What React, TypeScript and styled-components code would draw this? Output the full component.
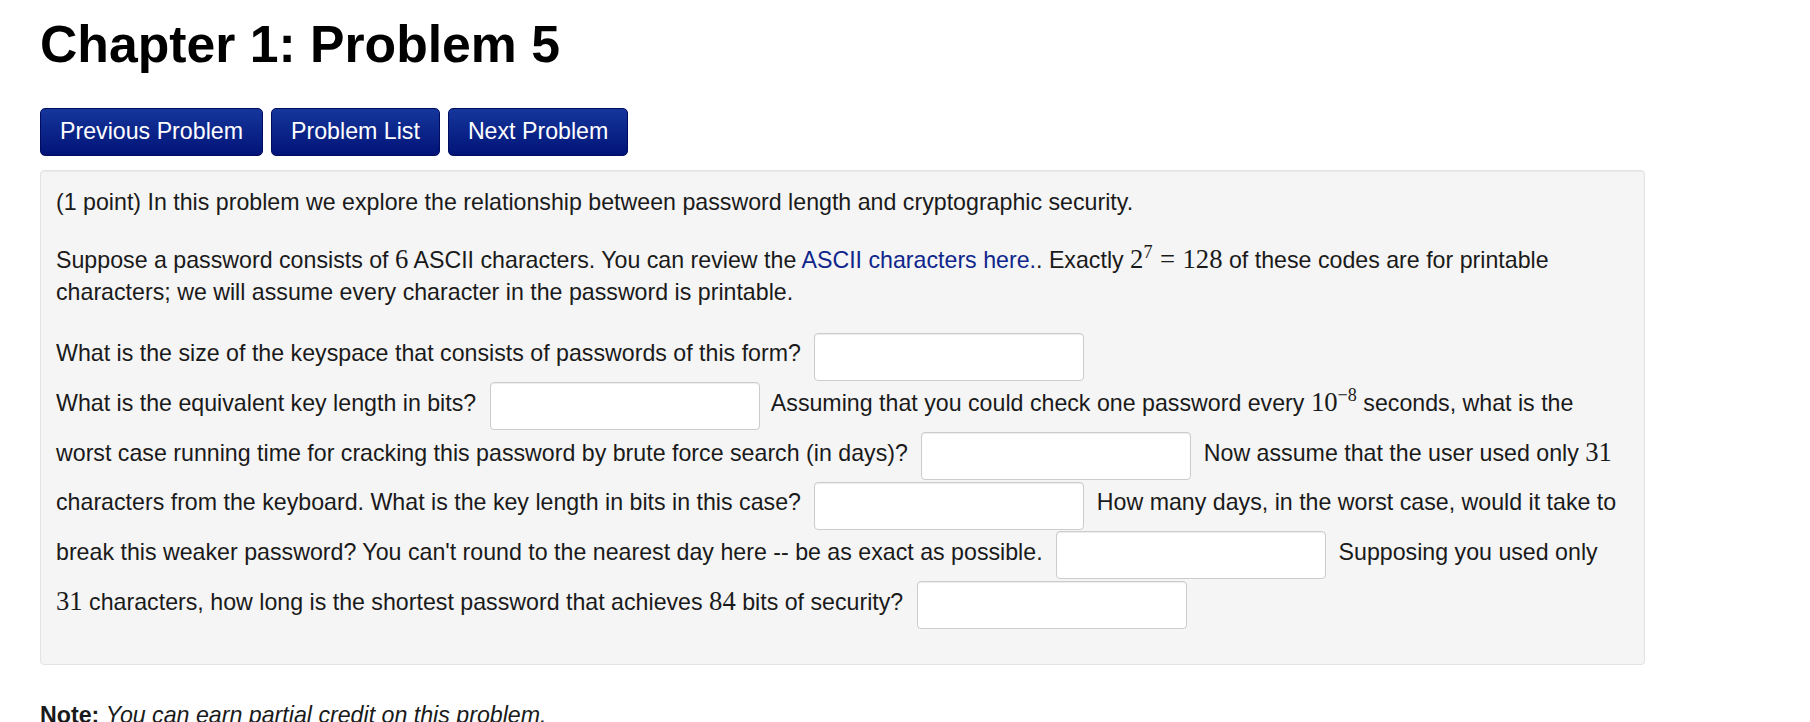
import React from "react";

import styled, { createGlobalStyle } from "styled-components";

const GlobalStyle = createGlobalStyle`
  html, body {
    margin: 0;
    padding: 0;
    background: #fff;
  }
  body {
    font-family: "Liberation Sans", Arial, Helvetica, sans-serif;
    font-size: 23.2px;
    line-height: 32px;
    color: #1a1a1a;
  }
`;

const Page = styled.div`
  padding-left: 40px;
  width: 1605px;
`;

const Title = styled.h1`
  margin: 16.4px 0 0 0;
  font-size: 51.7px;
  line-height: 1.1;
  font-weight: 700;
  color: #000;
`;

const NavRow = styled.div`
  display: flex;
  gap: 8px;
  margin-top: 34.6px;
`;

const NavButton = styled.button`
  height: 48px;
  padding: 0 19px;
  font-family: inherit;
  font-size: 23.2px;
  color: #fff;
  background: linear-gradient(#15369b, #011378);
  border: 1px solid #000d5e;
  border-radius: 5px;
  cursor: pointer;
`;

const Well = styled.div`
  margin-top: 14px;
  padding: 14.7px 15px 35.5px 15px;
  background: #f5f5f5;
  border: 1px solid #e3e3e3;
  border-radius: 4px;
  box-shadow: inset 0 1px 1px rgba(0, 0, 0, 0.05);
`;

const Paragraph = styled.p<{ $gap: number }>`
  margin: 0 0 ${(p) => p.$gap}px;
`;

const Link = styled.a`
  color: #10268c;
  text-decoration: none;
`;

const M = styled.span`
  font-family: "Liberation Serif", "DejaVu Serif", serif;
  font-size: 1.15em;
  line-height: 0;
`;

const Sup = styled.sup`
  font-size: 0.68em;
  line-height: 0;
  vertical-align: 0.55em;
`;

const Eq = styled.span`
  margin: 0 0.28em;
`;

const Answer = styled.input`
  box-sizing: border-box;
  width: 270px;
  height: 48px;
  margin: 2.33px 6px -0.67px 7px;
  padding: 4px 8px;
  vertical-align: middle;
  font-family: inherit;
  font-size: 20px;
  background: #fff;
  border: 1px solid #cccccc;
  border-radius: 4px;
  box-shadow: inset 0 1px 1px rgba(0, 0, 0, 0.075);
`;

const Note = styled.p`
  margin: 34.6px 0 0;
`;

const App: React.FC = () => {
  return (
    <Page>
      <GlobalStyle />
      <Title>Chapter 1: Problem 5</Title>
      <NavRow>
        <NavButton>Previous Problem</NavButton>
        <NavButton>Problem List</NavButton>
        <NavButton>Next Problem</NavButton>
      </NavRow>
      <Well>
        <Paragraph $gap={26.3}>
          (1 point) In this problem we explore the relationship between
          password length and cryptographic security.
        </Paragraph>
        <Paragraph $gap={22.5}>
          Suppose a password consists of <M>6</M> ASCII characters. You can
          review the <Link href="#">ASCII characters here.</Link>. Exactly{" "}
          <M>
            2<Sup>7</Sup>
            <Eq>=</Eq>128
          </M>{" "}
          of these codes are for printable characters; we will assume every
          character in the password is printable.
        </Paragraph>
        <Paragraph $gap={0}>
          What is the size of the keyspace that consists of passwords of this
          form? <Answer type="text" aria-label="answer 1" />
          <br />
          What is the equivalent key length in bits?{" "}
          <Answer type="text" aria-label="answer 2" /> Assuming that you could
          check one password every{" "}
          <M>
            10<Sup>−8</Sup>
          </M>{" "}
          seconds, what is the worst case running time for cracking this
          password by brute force search (in days)?{" "}
          <Answer type="text" aria-label="answer 3" /> Now assume that the user
          used only <M>31</M> characters from the keyboard. What is the key
          length in bits in this case?{" "}
          <Answer type="text" aria-label="answer 4" /> How many days, in the
          worst case, would it take to break this weaker password? You can't
          round to the nearest day here -- be as exact as possible.{" "}
          <Answer type="text" aria-label="answer 5" /> Supposing you used only{" "}
          <M>31</M> characters, how long is the shortest password that achieves{" "}
          <M>84</M> bits of security?{" "}
          <Answer type="text" aria-label="answer 6" />
        </Paragraph>
      </Well>
      <Note>
        <b>Note:</b> <i>You can earn partial credit on this problem.</i>
      </Note>
    </Page>
  );
};

export default App;
